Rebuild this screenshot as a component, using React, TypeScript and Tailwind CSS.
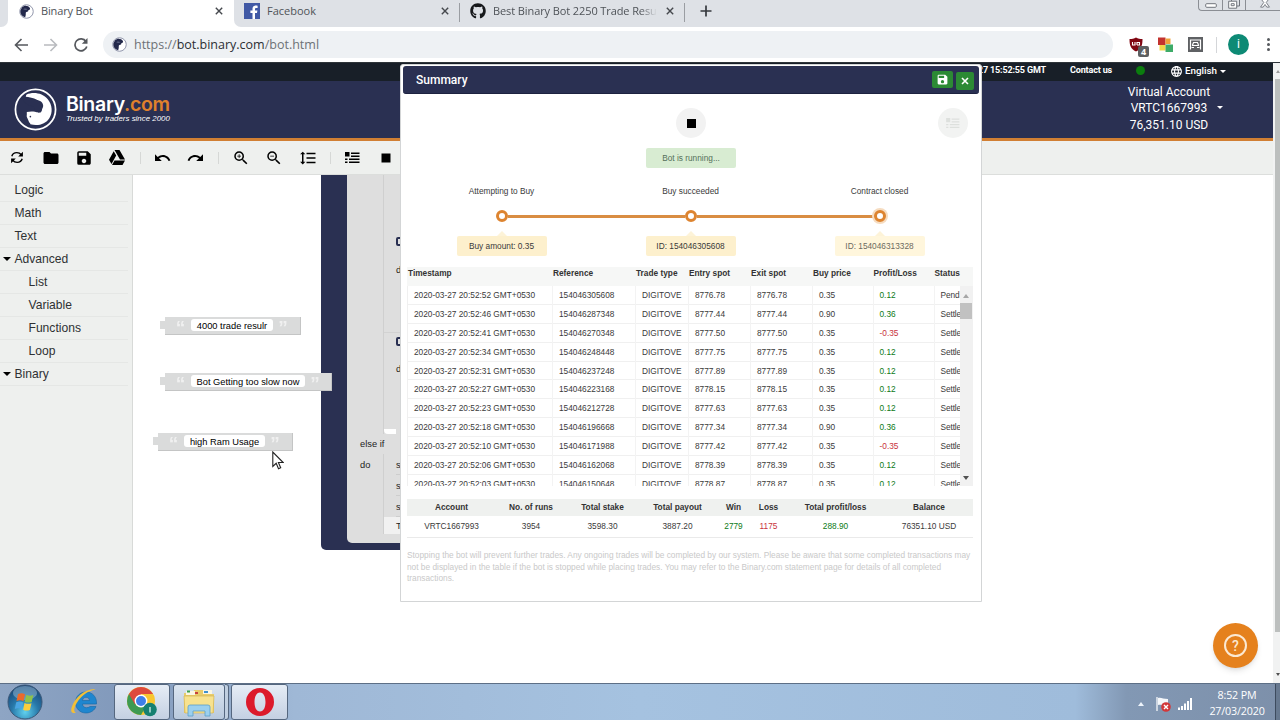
import React from "react";
import {
  MdFolder,
  MdSave,
  MdUndo,
  MdRedo,
  MdZoomIn,
  MdZoomOut,
  MdFormatLineSpacing,
  MdStop,
  MdLanguage,
} from "react-icons/md";
import { FaGithub } from "react-icons/fa";

interface Trade {
  time: string;
  reference: string;
  spot: string;
  price: string;
  profit: string;
  status: string;
}

const trades: Trade[] = [
  { time: "20:52:52", reference: "154046305608", spot: "8776.78", price: "0.35", profit: "0.12", status: "Pend" },
  { time: "20:52:46", reference: "154046287348", spot: "8777.44", price: "0.90", profit: "0.36", status: "Settle" },
  { time: "20:52:41", reference: "154046270348", spot: "8777.50", price: "0.35", profit: "-0.35", status: "Settle" },
  { time: "20:52:34", reference: "154046248448", spot: "8777.75", price: "0.35", profit: "0.12", status: "Settle" },
  { time: "20:52:31", reference: "154046237248", spot: "8777.89", price: "0.35", profit: "0.12", status: "Settle" },
  { time: "20:52:27", reference: "154046223168", spot: "8778.15", price: "0.35", profit: "0.12", status: "Settle" },
  { time: "20:52:23", reference: "154046212728", spot: "8777.63", price: "0.35", profit: "0.12", status: "Settle" },
  { time: "20:52:18", reference: "154046196668", spot: "8777.34", price: "0.90", profit: "0.36", status: "Settle" },
  { time: "20:52:10", reference: "154046171988", spot: "8777.42", price: "0.35", profit: "-0.35", status: "Settle" },
  { time: "20:52:06", reference: "154046162068", spot: "8778.39", price: "0.35", profit: "0.12", status: "Settle" },
  { time: "20:52:03", reference: "154046150648", spot: "8778.87", price: "0.35", profit: "0.12", status: "Settle" },
];

const categories = [
  { name: "Logic" },
  { name: "Math" },
  { name: "Text" },
  { name: "Advanced", open: true },
  { name: "List", nested: true },
  { name: "Variable", nested: true },
  { name: "Functions", nested: true },
  { name: "Loop", nested: true },
  { name: "Binary", open: true },
];

const tradeGrid =
  "grid grid-cols-[145px_83px_53px_62px_62px_60.5px_61px_26px]";
const summaryGrid =
  "grid grid-cols-[89px_70px_73px_77px_35px_35px_99px_88px] text-center";

const BinaryMark = ({ className }: { className: string }) => (
  <svg viewBox="0 0 42 42" className={className}>
    <circle cx="21" cy="21" r="19.6" fill="#2a3052" stroke="#fff" strokeWidth="1.7" />
    <path
      d="M12 6.500C19 3.500 28 5 33 11c4.500 5.500 5 13 1.500 18.500C31 35 24 37.500 16 35.500l-1.500-5-2-3 .5-3.500c3 1.500 6 2 8 .5l5-.5c2-2 2-5 0-7l-.5-3c-2.500-3-8-5-14-5.500z"
      fill="#fff"
    />
    <path d="M8 10.500c5 0 11-.5 17 2 4 2 4.500 6 2 8.500-2.500 1-5 2.500-8 1.500 1.500-1 1.500-2.500.5-4-3-1-8-2-11.500-8z" fill="#2a3052" />
    <path d="M12.500 23.500c4-1 8-.5 11 .5l-1 7-7.500 3-2.500-6z" fill="#fff" />
    <circle cx="16" cy="28" r=".8" fill="#2a3052" />
  </svg>
);

const BinaryFavicon = () => (
  <svg viewBox="0 0 16 16" className="w-[15px] h-[15px] shrink-0">
    <circle cx="8" cy="8" r="7.2" fill="#fff" stroke="#8a8fa5" strokeWidth="1" />
    <path
      d="M3 3.600C5.500 1 10 1.500 11.500 4c1 1.800-.5 2.500-1.500 2.500.3 1.500-1 2-2 2C6.500 9 8 11 6.500 14 3 13.500 1 10 1.500 7z"
      fill="#23294b"
    />
    <path d="M4.500 5.500c2-1 3.500-.5 4.500 0-1 1.200-3 1-4.500 0z" fill="#5b617f" />
  </svg>
);

const TabClose = () => (
  <svg viewBox="0 0 8 8" className="w-2 h-2 shrink-0">
    <path d="M.8.8l6.400 6.400M7.200.8L.8 7.200" stroke="#45484d" strokeWidth="1.400" />
  </svg>
);

const BrowserTabs = () => (
  <div className="h-[27px] bg-[#dee1e6] flex overflow-hidden text-[11px] text-[#4f5358] font-['Open_Sans',sans-serif]">
    <div className="w-[8px] bg-white">
      <div className="h-full bg-[#dee1e6] rounded-br-[7px]" />
    </div>
    <div className="w-[226px] bg-white flex items-center pl-[11px] pr-[11px] pb-[5px]">
      <BinaryFavicon />
      <span className="ml-[7px] flex-1 tracking-[-0.15px]">Binary Bot</span>
      <TabClose />
    </div>
    <div className="w-[234px] bg-white">
      <div className="h-full bg-[#dee1e6] rounded-bl-[7px] flex items-center pl-[10px] pr-[19px] pb-[5px]">
        <svg viewBox="0 0 16 16" className="w-[16px] h-[16px] shrink-0">
          <rect width="16" height="16" fill="#4159a5" />
          <path
            d="M11 16V10h2l.4-2.400H11V6.200c0-.8.4-1.200 1.300-1.200h1.300V2.800C11 2.200 8.500 2.900 8.500 5.600v2H6.400V10h2.100v6z"
            fill="#fff"
          />
        </svg>
        <span className="ml-[7px] flex-1">Facebook</span>
        <TabClose />
      </div>
    </div>
    <div className="flex items-center pb-[5px]">
      <div className="w-px h-[19px] bg-[#9a9da2] mt-[3px] -ml-[9px]" />
      <FaGithub className="w-4 h-4 ml-[10px] text-[#17191c]" />
      <span className="ml-[7px] w-[164px] overflow-hidden whitespace-nowrap tracking-[-0.1px] [mask-image:linear-gradient(to_right,black_90%,transparent)]">
        Best Binary Bot 2250 Trade Resul
      </span>
      <span className="ml-[9px]">
        <TabClose />
      </span>
      <div className="w-px h-[19px] bg-[#9a9da2] mt-[3px] ml-[10px]" />
      <svg viewBox="0 0 12 12" className="w-3 h-3 ml-[15px]">
        <path d="M6 .5v11M.5 6h11" stroke="#36393e" strokeWidth="1.700" />
      </svg>
    </div>
    {/* Window buttons */}
    <div className="ml-auto h-[11px] w-[82px] border border-t-0 border-r-0 border-[#8b8e94] rounded-bl-[4px] flex">
      <div className="w-[24px] border-r border-[#8b8e94] flex items-center justify-center">
        <svg viewBox="0 0 12 5" className="w-3 h-[5px]">
          <rect x=".7" y=".7" width="10.600" height="3.600" rx="1" fill="#fff" stroke="#70747c" />
        </svg>
      </div>
      <div className="w-[23px] border-r border-[#8b8e94] flex justify-center">
        <svg viewBox="0 0 12 9" className="w-3 h-[9px]">
          <path d="M3.500 0v1M11.500 0v6H9" fill="none" stroke="#70747c" />
          <path d="M.7 1.200h8v7h-8zM3.200 3.700h3v2h-3z" fill="#fff" stroke="#70747c" />
        </svg>
      </div>
      <div className="flex-1 flex justify-center pl-[4px]">
        <svg viewBox="0 0 12 9" className="w-3 h-[8px]">
          <path
            d="M2.500 0L4.600 2.800 1 8h3l2-3 2 3h3L7.400 2.800 9.500 0"
            fill="#fff"
            stroke="#70747c"
          />
        </svg>
      </div>
    </div>
  </div>
);

const AddressBar = () => (
  <div className="h-[35px] bg-white flex items-center">
    <svg viewBox="0 0 14 14" className="w-[14px] h-[14px] ml-[14px]">
      <path d="M7.500 1L1.500 7l6 6M1.500 7H14" fill="none" stroke="#55585d" strokeWidth="1.600" />
    </svg>
    <svg viewBox="0 0 14 14" className="w-[14px] h-[14px] ml-[16px]">
      <path d="M6.500 1l6 6-6 6M12.500 7H0" fill="none" stroke="#b9bbbf" strokeWidth="1.600" />
    </svg>
    <svg viewBox="0 0 14 14" className="w-[14px] h-[14px] ml-[16px]">
      <path d="M12 3.500A6 6 0 1 0 12.800 8.500" fill="none" stroke="#55585d" strokeWidth="1.700" />
      <path d="M13.500 0v5.800H7.800z" fill="#55585d" />
    </svg>
    <div className="ml-[15px] w-[1010px] h-[27px] rounded-full bg-[#eef1f4] flex items-center pl-[9px] text-[12.500px] font-['Open_Sans',sans-serif] text-[#6d7176]">
      <BinaryFavicon />
      <span className="ml-[7px] mt-px">
        https://<span className="text-[#2b2e33]">bot.binary.com</span>/bot.html
      </span>
    </div>
    <div className="relative ml-[16px]">
      <svg viewBox="0 0 14 15" className="w-[14px] h-[15px]">
        <path d="M7 .5c2 1.200 4 1.500 6.500 1.500 0 6-1 10-6.500 12.500C1.500 12 .5 8 .5 2 3 2 5 1.700 7 .5z" fill="#800612" />
        <path d="M3.500 5v3h2.500V5M8 8V5.500h2.500V8H8" fill="none" stroke="#fff" strokeWidth="1.100" />
      </svg>
      <span className="absolute left-[9px] top-[9px] w-[11px] h-[11px] bg-[#5d5f61] rounded-[2px] text-white font-bold text-[9px] leading-[11px] text-center font-['Open_Sans',sans-serif]">
        4
      </span>
    </div>
    <svg viewBox="0 0 15 15" className="w-[15px] h-[15px] ml-[15px]">
      <path d="M0 .5h7.500V8H0z" fill="#c3332f" />
      <path d="M7.500 1.500H12.500V7H7.500z" fill="#efa23a" />
      <path d="M1.500 8H7.500v5.500h-6z" fill="#f0d84a" />
      <path d="M7.500 7.500H15V15H7.500z" fill="#3dab68" />
    </svg>
    <svg viewBox="0 0 15 15" className="w-[15px] h-[15px] ml-[15px]">
      <rect width="15" height="15" fill="#5f6164" />
      <path d="M2.500 12.500V3h10v9.500" fill="none" stroke="#fff" strokeWidth="1.200" />
      <path d="M4.500 8l1-2.500h4l1 2.500M4 8.500h7M3.500 10.500h2.500M9 10.500h2.500" fill="none" stroke="#fff" strokeWidth="1.200" />
    </svg>
    <div className="w-px h-4 bg-[#d4d6d9] ml-[13px]" />
    <div className="w-[21px] h-[21px] ml-[11px] rounded-full bg-[#0d8a75] text-white text-[12px] leading-[20px] text-center font-[Roboto,sans-serif]">
      i
    </div>
    <div className="ml-[18px] flex flex-col gap-[2px]">
      <i className="w-[3px] h-[3px] rounded-full bg-[#55585d]" />
      <i className="w-[3px] h-[3px] rounded-full bg-[#55585d]" />
      <i className="w-[3px] h-[3px] rounded-full bg-[#55585d]" />
    </div>
  </div>
);

const SiteHeader = () => (
  <>
    <div className="h-[18px] bg-[#181f28] flex items-center text-white text-[9px] font-bold font-[Roboto,sans-serif] whitespace-nowrap">
      <span className="ml-[941px] w-[104px] text-right tracking-[-0.15px] pb-[3px]">
        2020-03-27 15:52:55 GMT
      </span>
      <span className="ml-[25px] w-[42px] pb-[3px] tracking-[-0.15px]">Contact us</span>
      <i className="ml-[24px] mt-[-3px] w-[9px] h-[9px] rounded-full bg-[#0b7d0e]" />
      <MdLanguage className="ml-[25px] w-[13px] h-[13px] mt-[-2px]" />
      <span className="ml-[2px] text-[9.800px] font-medium pb-[2px]">English</span>
      <i className="ml-[3px] mt-[-1px] border-x-[3px] border-x-transparent border-t-[3px] border-t-white" />
    </div>
    <div className="h-[60px] bg-[#2a3052] border-b-[3px] border-[#d17f33] flex items-center">
      <BinaryMark className="w-[43px] h-[43px] ml-[14px]" />
      <div className="ml-[9px] text-white whitespace-nowrap -mt-[1px]">
        <div className="font-['Inter',sans-serif] font-semibold text-[19.500px] leading-[20px] tracking-[-0.3px]">
          Binary<span className="text-[#e0812c]">.com</span>
        </div>
        <div className="text-[7.900px] leading-[10px] italic font-['Liberation_Sans',sans-serif]">
          Trusted by traders since 2000
        </div>
      </div>
      <div className="ml-auto mr-[50px] flex items-center text-white text-[12px] leading-[16.200px] font-[Roboto,sans-serif] text-center">
        <div className="w-[100px] whitespace-nowrap -mt-[2px]">
          <p>Virtual Account</p>
          <p>VRTC1667993</p>
          <p>76,351.10 USD</p>
        </div>
        <i className="-ml-[2px] mt-[-4px] border-x-[3px] border-x-transparent border-t-[3px] border-t-white" />
      </div>
    </div>
  </>
);

const ListGlyph = ({ className }: { className: string }) => (
  <svg viewBox="0 0 15 12" className={className} fill="currentColor">
    <path d="M0 0h4.500v4.500H0zM6 .5h8.500V2H6zM6 3.500h8.500V5H6zM0 6.500h2.500V8H0zM4 6.500h10.500V8H4zM0 9.500h2.500V11H0zM4 9.500h10.500V11H4z" />
  </svg>
);

const EditorToolbar = () => (
  <div className="h-[34px] bg-[#eef0ee] border-b border-[#dcdedc] flex items-center text-black">
    {/* Reset */}
    <svg viewBox="0 0 14 13" className="w-[14px] h-[13px] ml-[10px]">
      <path d="M1.800 5.200C2.500 2.800 4.500 1.600 6.800 1.600c2 0 3.400.8 4.500 2.200M12.200 7.800c-.7 2.400-2.700 3.600-5 3.600-2 0-3.400-.8-4.500-2.200" fill="none" stroke="#000" strokeWidth="1.400" />
      <path d="M12.900.8v4.700H8.200zM1.100 12.200V7.500h4.700z" />
    </svg>
    <MdFolder className="w-[18px] h-[18px] ml-[18px]" />
    <MdSave className="w-[18px] h-[18px] ml-[15px]" />
    {/* Google Drive */}
    <svg viewBox="0 0 16 15" className="w-[16px] h-[15px] ml-[16px]">
      <path d="M5.500 0h5L16 9.500h-5zM4.700 1.200L7.200 5.500 2.500 14 0 9.700zM5.500 10.500H16L13.500 15H3z" />
    </svg>
    <div className="w-px h-3 bg-[#d6d8d6] ml-[15px]" />
    <MdUndo className="w-[19px] h-[18px] ml-[12px]" />
    <MdRedo className="w-[19px] h-[18px] ml-[14px]" />
    <div className="w-px h-3 bg-[#d6d8d6] ml-[13px]" />
    <MdZoomIn className="w-[18px] h-[18px] ml-[13px]" />
    <MdZoomOut className="w-[18px] h-[18px] ml-[15px]" />
    <MdFormatLineSpacing className="w-[18px] h-[18px] ml-[16px]" />
    <div className="w-px h-3 bg-[#d6d8d6] ml-[13px]" />
    <ListGlyph className="w-[15px] h-[12px] ml-[14px]" />
    <MdStop className="w-[18px] h-[18px] ml-[17px]" />
  </div>
);

const Toolbox = () => (
  <div className="w-[133px] shrink-0 bg-[#eef0ee] border-r border-[#d8dad8] pt-[4px] text-[12.100px] text-[#2f3133] font-['Liberation_Sans',Arial,sans-serif]">
    {categories.map((c) => (
      <div
        key={c.name}
        className="h-[23px] mr-[4px] flex items-center border-b border-[#e5e7e5]"
      >
        <i
          className={
            c.open
              ? "ml-[3px] w-0 border-x-[4px] border-x-transparent border-t-[4.500px] border-t-black"
              : "w-[11px]"
          }
        />
        <span className={c.nested ? "ml-[17.500px]" : "ml-[3.500px]"}>{c.name}</span>
      </div>
    ))}
  </div>
);

const TextBlock = ({ text, place, field }: { text: string; place: string; field: string }) => (
  <div className={`absolute h-[18px] flex items-center bg-[#dadbdb] border-b border-r border-[#c4c5c5] ${place}`}>
    <i className="absolute -left-[5px] top-[4px] w-[5px] h-[8px] bg-[#dadbdb]" />
    <span className="w-[30px] pl-[1px] text-center text-white text-[19px] leading-[14px] h-[10px] font-bold opacity-60">“</span>
    <span className={`h-[12px] -mt-px bg-white rounded-[3px] text-black leading-[14px] text-center whitespace-nowrap -ml-[4px] ${field}`}>
      {text}
    </span>
    <span className="w-[20px] text-center text-white text-[19px] leading-[14px] h-[10px] font-bold opacity-60">”</span>
  </div>
);

const Workspace = () => (
  <div className="relative flex-1 bg-white overflow-hidden text-[9.300px] text-[#222] font-['Liberation_Sans',Arial,sans-serif]">
    {/* Trade definition block, cut off by the dialog */}
    <div className="absolute left-[188px] -top-[10px] w-[120px] h-[385px] bg-[#2a3052] rounded-bl-[5px]">
      <div className="absolute left-[26px] top-0 w-[94px] h-[378px] bg-[#dedede] rounded-bl-[5px]">
        <div className="absolute left-[36px] top-0 w-px h-[269px] bg-[#cfcfcf]" />
        <div className="absolute left-[37px] top-[264px] w-[12px] h-[5px] bg-white rounded-bl-[4px]" />
        <div className="absolute left-[37px] top-[167px] w-[20px] h-px bg-[#d2d2d2]" />
        <div className="absolute left-[49px] top-[72px] w-[9px] h-[9px] rounded-[2px] border-2 border-[#2a3052]" />
        <div className="absolute left-[49px] top-[172px] w-[9px] h-[9px] rounded-[2px] border-2 border-[#2a3052]" />
        <span className="absolute left-[49px] top-[99px]">d</span>
        <span className="absolute left-[49px] top-[198px]">d</span>
        <span className="absolute left-[13px] top-[272px] leading-[14px]">else if</span>
        <span className="absolute left-[13px] top-[293px] leading-[14px]">do</span>
        <div className="absolute left-[36px] top-[289px] w-[22px] border-l border-[#cfcfcf] leading-[22px] pl-[12px]">
          <p className="h-[21px] border-b border-[#cdcdcd]">s</p>
          <p className="h-[21px] border-b border-[#cdcdcd]">s</p>
          <p className="h-[21px] border-b border-[#cdcdcd]">s</p>
          <p className="h-[17px] leading-[18px] bg-[#f1f1f1] -ml-[12px] pl-[12px]">T</p>
        </div>
      </div>
    </div>
    <TextBlock text="4000 trade resulr" place="left-[32px] top-[142px] w-[136px]" field="w-[82px]" />
    <TextBlock text="Bot Getting too slow now" place="left-[32px] top-[198px] w-[167px]" field="w-[114px]" />
    <TextBlock text="high Ram Usage" place="left-[25px] top-[258px] w-[135px]" field="w-[81px]" />
    {/* Mouse pointer */}
    <svg viewBox="0 0 12 19" className="absolute left-[139px] top-[276px] w-[12px] h-[19px]">
      <path
        d="M.8 1v14.500l3.400-3.200 2.300 5.400 2.200-1-2.300-5.200h4.800z"
        fill="#fff"
        stroke="#222"
        strokeWidth="1.100"
      />
    </svg>
    {/* Help button */}
    <div className="absolute left-[1080px] top-[448px] w-[45px] h-[45px] rounded-full bg-[#e5811d] shadow-md flex items-center justify-center">
      <div className="w-[23px] h-[23px] rounded-full border-2 border-[#fbe9d3] text-[#fbe9d3] text-[14px] font-medium leading-[20px] text-center font-[Roboto,sans-serif]">
        ?
      </div>
    </div>
  </div>
);

const TradeTable = () => (
  <div className="mt-[11px] w-[566px]">
    <div className={`${tradeGrid} h-[19px] bg-[#f6f7f6] font-bold text-[#333] leading-[13px] pl-px whitespace-nowrap`}>
      <span>Timestamp</span>
      <span>Reference</span>
      <span>Trade type</span>
      <span>Entry spot</span>
      <span>Exit spot</span>
      <span>Buy price</span>
      <span>Profit/Loss</span>
      <span>Status</span>
    </div>
    <div className="h-[200px] flex overflow-hidden">
      <div className="w-[552.500px] overflow-hidden border-l border-[#f0f0f0]">
        {trades.map((t) => (
          <div
            key={t.reference}
            className={`${tradeGrid} h-[18.900px] leading-[19.500px] border-b border-[#f0f0f0] whitespace-nowrap [&>*]:pl-[6px] [&>*]:border-r [&>*]:border-[#f3f3f3]`}
          >
            <span>2020-03-27 {t.time} GMT+0530</span>
            <span>{t.reference}</span>
            <span>DIGITOVE</span>
            <span>{t.spot}</span>
            <span>{t.spot}</span>
            <span>{t.price}</span>
            <span className={t.profit.startsWith("-") ? "text-[#c8323c]" : "text-[#0c7a16]"}>
              {t.profit}
            </span>
            <span className="tracking-[-0.1px]">{t.status}</span>
          </div>
        ))}
      </div>
      <div className="w-[13.500px] bg-[#f1f1f1] flex flex-col items-center pt-[8px] pb-[6px]">
        <i className="border-x-[3.500px] border-x-transparent border-b-[4px] border-b-[#a6a6a6]" />
        <div className="mt-[5px] w-[12px] h-[16px] bg-[#c1c1c1]" />
        <i className="mt-auto border-x-[3.500px] border-x-transparent border-t-[4px] border-t-[#505050]" />
      </div>
    </div>
  </div>
);

const Step = ({ title, note, faded }: { title: string; note: string; faded?: boolean }) => (
  <div className="flex flex-col items-center">
    <span className="h-[12px] leading-[12px]">{title}</span>
    <i className="mt-[34px] border-x-[5px] border-x-transparent border-b-[5px] border-b-[#fdf3d8]" />
    <div
      className={`w-[90px] h-[20px] leading-[20px] text-center rounded-[2px] ${
        faded ? "bg-[#fff6dc] text-[#6d6a60]" : "bg-[#fdf0cd]"
      }`}
    >
      {note}
    </div>
  </div>
);

const StepDot = ({ glow }: { glow?: boolean }) => (
  <i
    className={`w-[12px] h-[12px] rounded-full border-[3px] border-[#dd8430] bg-white ${
      glow ? "shadow-[0_0_0_2px_#f6dcc0]" : ""
    }`}
  />
);

const SummaryDialog = () => (
  <div className="absolute left-[400px] top-[64px] w-[582px] h-[538px] bg-white border border-[#d3d5d6] rounded-t-[3px] px-[2px] pt-px text-[8.300px] text-[#3a3a3a] font-['Liberation_Sans',Arial,sans-serif]">
    <div className="h-[28px] bg-[#2a3052] rounded-[3px] border-b border-[#1d2240] flex items-center pl-[13px] pr-[5px] text-white">
      <span className="flex-1 text-[12px] font-medium font-[Roboto,sans-serif]">Summary</span>
      <div className="w-[21px] h-[17px] bg-[#2c8a34] rounded-[2px] flex justify-center items-center">
        <MdSave className="w-[13px] h-[13px] -mt-px" />
      </div>
      <div className="ml-[3px] mt-[3px] w-[18px] h-[18px] bg-[#2c8a34] rounded-[2px] flex justify-center items-center">
        <svg viewBox="0 0 8 8" className="w-[8px] h-[8px]">
          <path d="M1 1l6 6M7 1L1 7" stroke="#fff" strokeWidth="1.600" />
        </svg>
      </div>
    </div>
    <div className="px-[4px]">
      <div className="relative mt-[14px] flex justify-center">
        <div className="w-[30px] h-[30px] rounded-full bg-[#f2f2f2] flex items-center justify-center">
          <i className="w-[9px] h-[9px] bg-black" />
        </div>
        <div className="absolute right-[7px] top-0 w-[30px] h-[30px] rounded-full bg-[#f2f3f2] flex items-center justify-center">
          <ListGlyph className="w-[14px] h-[11px] text-[#dde0dd]" />
        </div>
      </div>
      <div className="mx-auto mt-[10px] w-[90px] h-[20px] leading-[21px] text-center rounded-[2px] bg-[#d8ecd2] text-[#54705a]">
        Bot is running...
      </div>
      <div className="relative mt-[17px] w-[567px]">
        <div className="grid grid-cols-3">
          <Step title="Attempting to Buy" note="Buy amount: 0.35" />
          <Step title="Buy succeeded" note="ID: 154046305608" />
          <Step title="Contract closed" note="ID: 154046313328" faded />
        </div>
        {/* Progress rail between the labels */}
        <div className="absolute left-[89px] right-[88px] top-[25px] flex items-center">
          <StepDot />
          <div className="flex-1 h-[3px] bg-[#d98d42]" />
          <StepDot />
          <div className="flex-1 h-[3px] bg-[#d98d42]" />
          <StepDot glow />
        </div>
      </div>
      <TradeTable />
      <div className="mt-[13px] w-[566px] border-b border-[#eaeaea]">
        <div className={`${summaryGrid} h-[17px] leading-[16px] bg-[#eff1ef] font-bold text-[#333]`}>
          <span>Account</span>
          <span>No. of runs</span>
          <span>Total stake</span>
          <span>Total payout</span>
          <span>Win</span>
          <span>Loss</span>
          <span>Total profit/loss</span>
          <span>Balance</span>
        </div>
        <div className={`${summaryGrid} h-[21px] leading-[20px]`}>
          <span>VRTC1667993</span>
          <span>3954</span>
          <span>3598.30</span>
          <span>3887.20</span>
          <span className="text-[#0c7a16]">2779</span>
          <span className="text-[#c8323c]">1175</span>
          <span className="text-[#0c7a16]">288.90</span>
          <span>76351.10 USD</span>
        </div>
      </div>
      <p className="mt-[12px] text-[8.320px] leading-[11.500px] whitespace-nowrap text-[#c9c9c9]">
        Stopping the bot will prevent further trades. Any ongoing trades will be completed by our system. Please be aware that some completed transactions may
        <br />
        not be displayed in the table if the bot is stopped while placing trades. You may refer to the Binary.com statement page for details of all completed
        <br />
        transactions.
      </p>
    </div>
  </div>
);

const Taskbar = () => (
  <div className="h-[37px] border-t border-[#5d6f86] flex items-stretch bg-[linear-gradient(to_right,#8ea5c4_0%,#8199bb_10%,#9fb8d6_23%,#a5c2e0_50%,#9fbcdb_84%,#8298b4_88%,#7d90aa_100%)] font-['Open_Sans',sans-serif]">
    {/* Start orb */}
    <svg viewBox="0 0 36 36" className="w-[36px] h-[36px] ml-[7px]">
      <defs>
        <radialGradient id="orb" cx=".5" cy=".8" r=".8">
          <stop offset="0" stopColor="#5fd0ee" />
          <stop offset=".5" stopColor="#2777a8" />
          <stop offset="1" stopColor="#1b4473" />
        </radialGradient>
      </defs>
      <circle cx="18" cy="18" r="17" fill="url(#orb)" stroke="#3b5878" />
      <ellipse cx="18" cy="9" rx="12" ry="7" fill="#a9c9e0" opacity=".45" />
      <path d="M11 10c2.500-1 5-1 7 .3l-1.500 7c-2-1.200-4.500-1.200-7-.3z" fill="#ea6a2c" />
      <path d="M19.300 10.800c2 1 4.500 1.200 7 .2l-1.600 7c-2.500.9-5 .8-7-.3z" fill="#8fc24a" />
      <path d="M9.200 18.300c2.500-1 5-1 7 .3l-1.400 6.600c-2.200-1.200-4.700-1.200-7-.3z" fill="#4aa5e2" />
      <path d="M17.500 19c2 1 4.500 1.200 7 .3l-1.600 6.700c-2.500.9-4.700.8-6.800-.3z" fill="#fbce3d" />
    </svg>
    {/* Internet Explorer */}
    <svg viewBox="0 0 28 28" className="w-[28px] h-[28px] ml-[27px] mt-[3px]">
      <path
        fillRule="evenodd"
        d="M26 19.500C24.500 23.500 20.500 26 16 26 10 26 5.500 21.500 5.500 15.500S10 5 16 5c6.500 0 11 5 10.500 12H12.500c.3 2.500 1.800 3.700 4 3.700 1.600 0 2.800-.5 3.500-1.200zM12.500 13.500h7c-.2-2-1.500-3.200-3.500-3.200s-3.200 1.200-3.500 3.200z"
        fill="#1f86cf"
        stroke="#1666a3"
        strokeWidth=".6"
      />
      <path d="M25.500 3C23 0 9 5 3.500 16-.5 24 1 27.500 6 25.500 2.500 25 4.500 18 10 11.500S22.500 2.500 25.500 3z" fill="#f3bf36" />
    </svg>
    {/* Chrome */}
    <div className="ml-[16px] w-[56px] bg-[linear-gradient(#e6edf6,#c4d0e2)] border border-[#55677f] rounded-[3px] flex items-center justify-center">
      <svg viewBox="0 0 30 30" className="w-[30px] h-[30px]">
        <circle cx="14" cy="14" r="14" fill="#f8c62f" />
        <path d="M14 14L1.900 7A14 14 0 0 1 26.100 7H14z" fill="#dd4a3d" />
        <path d="M1.900 7A14 14 0 0 0 14 28l6-10.500-6-3.500z" fill="#3d9a53" />
        <path d="M1.900 7L8 17.500 14 7z" fill="#dd4a3d" />
        <circle cx="14" cy="14" r="6.400" fill="#fff" />
        <circle cx="14" cy="14" r="5" fill="#3f7fe8" />
        <circle cx="23" cy="22.500" r="6.800" fill="#168071" />
        <path d="M23 20v5.500" stroke="#d5efe9" strokeWidth="1.300" />
      </svg>
    </div>
    {/* Explorer */}
    <div className="ml-[3px] w-[52px] bg-[linear-gradient(#dbe5f1,#b8c9dd)] border border-[#55677f] rounded-[3px] flex items-center justify-center">
      <svg viewBox="0 0 32 30" className="w-[32px] h-[30px]">
        <path d="M1 6h9l1-3h18v4h2v19H1z" fill="#e8cc6a" />
        <path d="M3 4h9v4H3zM20 3h9v4h-9z" fill="#faf6e2" />
        <path d="M4 3.500h3v2H4z" fill="#3da24d" />
        <path d="M12 5h3v2h-3z" fill="#c8423b" />
        <path d="M21 4h4v2h-4z" fill="#3e91cf" />
        <path d="M1 9h30l-1 17H2z" fill="#f7e28f" stroke="#cfae4e" strokeWidth=".6" />
        <path d="M5 29V20q0-2 2-2h18q2 0 2 2v9h-5v-5H10v5z" fill="#9bd0ef" stroke="#5b9fc8" strokeWidth=".8" />
      </svg>
    </div>
    <div className="w-[4px] border-y border-r border-[#55677f] rounded-r-[3px] bg-[#c0cfe0]" />
    {/* Opera */}
    <div className="ml-[2px] w-[57px] bg-[linear-gradient(#e6edf6,#c4d0e2)] border border-[#55677f] rounded-[3px] flex items-center justify-center">
      <svg viewBox="0 0 30 30" className="w-[30px] h-[30px]">
        <path
          fillRule="evenodd"
          d="M15 1a14 14 0 1 0 0 28 14 14 0 0 0 0-28zm0 4.500c3.800 0 5.500 4.500 5.500 9.500s-1.700 9.500-5.500 9.500S9.500 20 9.500 15 11.200 5.500 15 5.500z"
          fill="#dc1a2b"
        />
      </svg>
    </div>
    {/* Notification area */}
    <div className="ml-auto flex items-center text-white">
      <i className="border-x-[3.500px] border-x-transparent border-b-[4px] border-b-[#eef4fb] mt-[3px]" />
      <svg viewBox="0 0 16 16" className="w-[16px] h-[16px] ml-[11px] mt-[3px]">
        <path d="M2 1v14" stroke="#fff" strokeWidth="1.200" />
        <path d="M3 2c3-1 5 1 10 1v6c-4 1-7-1-10 0z" fill="#f4f7fa" />
        <circle cx="11" cy="11" r="4.800" fill="#d2383a" />
        <path d="M9 9l4 4M13 9l-4 4" stroke="#fff" strokeWidth="1.400" />
      </svg>
      <svg viewBox="0 0 14 12" className="w-[14px] h-[12px] ml-[7px] mt-[3px]" fill="#fff">
        <path d="M0 9.500h2V12H0zM3 8h2v4H3zM6 5.500h2V12H6zM9 3h2v9H9zM12 0h2v12h-2z" />
      </svg>
      <div className="ml-[16px] w-[58px] text-center text-[10.700px] leading-[15.800px] mt-[3px] whitespace-nowrap tracking-[-0.15px]">
        <p>8:52 PM</p>
        <p>27/03/2020</p>
      </div>
      <div className="ml-[9px] w-[5px] h-full border-l border-[#3d4b5e] bg-[#66788f]" />
    </div>
  </div>
);

const App: React.FC = () => {
  return (
    <div className="relative w-[1280px] h-[720px] overflow-hidden flex flex-col bg-white">
      <BrowserTabs />
      <AddressBar />
      <div className="h-[621px] flex border-t border-[#2e3439]">
        <div className="w-[1273px] flex flex-col">
          <SiteHeader />
          <EditorToolbar />
          <div className="flex-1 flex min-h-0">
            <Toolbox />
            <Workspace />
          </div>
        </div>
        {/* Page scrollbar */}
        <div className="flex-1 bg-[#f1f2f2] flex flex-col items-end pt-[7px] pb-[7px]">
          <i className="border-x-[2.500px] border-x-transparent border-b-[3px] border-b-[#9b9b9b]" />
          <div className="mt-[6px] w-[5px] h-[553px] bg-[#bcbfbe]" />
          <i className="mt-auto border-x-[2.500px] border-x-transparent border-t-[3px] border-t-[#505050]" />
        </div>
      </div>
      <Taskbar />
      <SummaryDialog />
    </div>
  );
};

export default App;
